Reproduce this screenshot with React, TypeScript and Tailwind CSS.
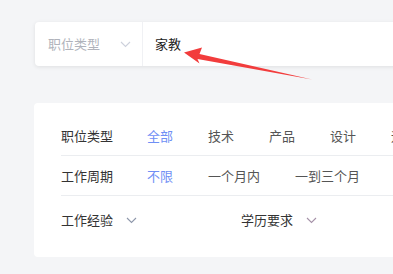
import React from "react";

function Chevron({ color = "#c5cad6" }: { color?: string }) {
  return (
    <svg width="11" height="7" viewBox="0 0 11 7" fill="none">
      <polyline points="1,1 5.5,5.5 10,1" stroke={color} strokeWidth="1.1" />
    </svg>
  );
}

const rows = [
  { label: "职位类型", items: ["全部", "技术", "产品", "设计", "运营"] },
  { label: "工作周期", items: ["不限", "一个月内", "一到三个月", "三个月以上"] },
];

export default function App() {
  return (
    <div className="relative w-[393px] h-[274px] overflow-hidden bg-[#f4f5f7] pt-[22px] font-['Noto_Sans_CJK_SC',sans-serif] text-[13px]">
      {/* search bar */}
      <div className="ml-[35px] w-[380px] h-[44px] bg-white rounded-[4px] shadow-[0_1px_4px_rgba(0,0,0,0.09)] flex items-center">
        <div className="w-[108px] h-full flex items-center justify-between pl-[13px] pr-[11px] border-r border-[#f0f1f4]">
          <span className="text-[#b0b3bb]">职位类型</span>
          <Chevron color="#cdd1dc" />
        </div>
        <span className="pl-[12px] text-[#222]">家教</span>
      </div>

      {/* filter panel */}
      <div className="mt-[37px] ml-[34px] w-[380px] bg-white rounded-[4px] pl-[27px] pt-[13px] pb-[13px]">
        {rows.map((row) => (
          <div key={row.label} className="flex items-center h-[40px] border-b border-[#ebedf0] whitespace-nowrap">
            <span className="w-[86px] shrink-0 text-[#333]">{row.label}</span>
            <div className="flex gap-[35px]">
              {row.items.map((item, i) => (
                <span key={item} className={i === 0 ? "text-[#6f8ff5]" : "text-[#555]"}>
                  {item}
                </span>
              ))}
            </div>
          </div>
        ))}
        <div className="flex items-center h-[48px] whitespace-nowrap">
          <div className="w-[180px] flex items-center gap-[13px]">
            <span className="text-[#333]">工作经验</span>
            <Chevron color="#8e97aa" />
          </div>
          <div className="flex items-center gap-[13px]">
            <span className="text-[#333]">学历要求</span>
            <Chevron color="#a592a8" />
          </div>
        </div>
      </div>

      {/* annotation arrow */}
      <svg className="absolute left-0 top-0" width="393" height="274" viewBox="0 0 393 274">
        <polygon
          points="184,52.5 202,47.5 199.5,54 312,79.5 197.5,59 199.5,63.5"
          fill="#f23c3c"
        />
      </svg>
    </div>
  );
}
